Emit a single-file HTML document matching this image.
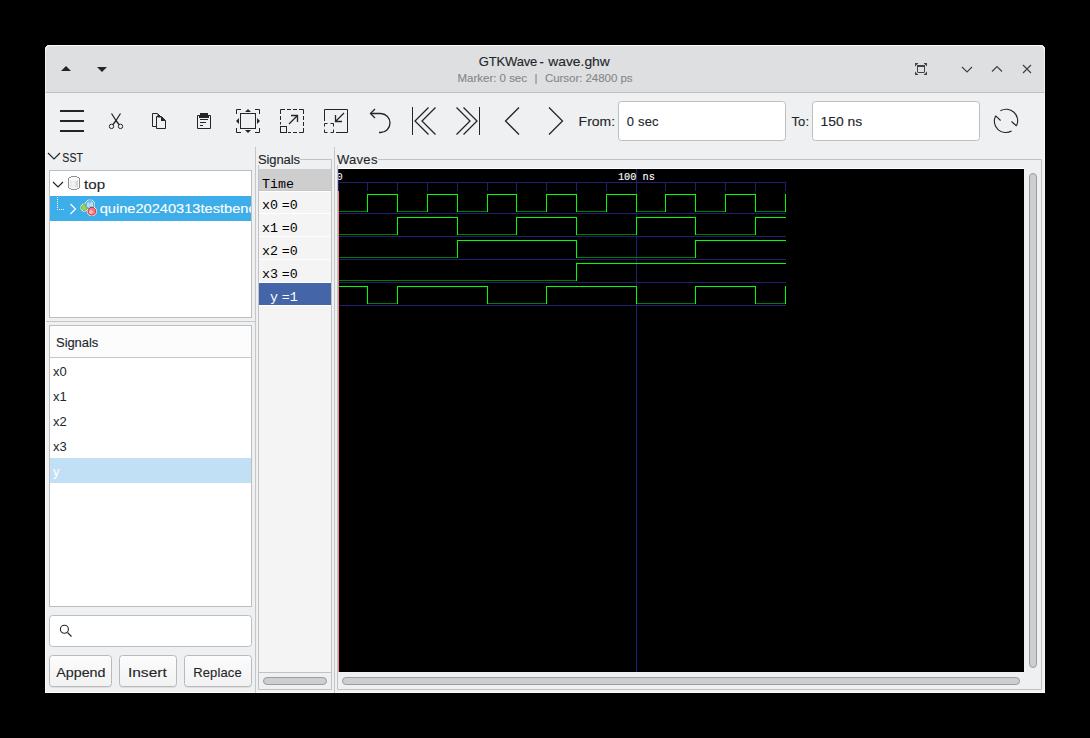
<!DOCTYPE html>
<html><head><meta charset="utf-8"><title>GTKWave - wave.ghw</title>
<style>html,body{margin:0;padding:0;background:#000;width:1090px;height:738px;overflow:hidden;position:relative;}</style>
</head><body>
<svg width="1090" height="738" viewBox="0 0 1090 738" style="position:absolute;left:0;top:0">
<rect x="0" y="0" width="1090" height="738" fill="#000"/>
<path d="M45 50 Q45 45 50 45 L1040 45 Q1045 45 1045 50 L1045 693 L45 693 Z" fill="#eff0f1"/>
<path d="M45 50 Q45 45 50 45 L1040 45 Q1045 45 1045 50 L1045 92 L45 92 Z" fill="#dedfe1"/>
<rect x="45" y="92" width="1000" height="1" fill="#bdbfc1" shape-rendering="crispEdges"/>
<path d="M45.5 693 L45.5 49.5" fill="none" stroke="#ffffff" stroke-opacity="0.55" stroke-width="1"/>
<path d="M1044.5 693 L1044.5 49.5" fill="none" stroke="#ffffff" stroke-opacity="0.55" stroke-width="1"/>
<path d="M45.5 50 Q45.5 45.5 50 45.5 L1040 45.5 Q1044.5 45.5 1044.5 50" fill="none" stroke="#ffffff" stroke-opacity="0.9" stroke-width="1"/>
<rect x="45" y="692" width="1000" height="1" fill="#ffffff" fill-opacity="0.8"/>
<polygon points="61,71 66,66 71,71" fill="#232629"/>
<polygon points="97,67 107,67 102,72" fill="#232629"/>
<text x="478.69" y="66" font-family="'Liberation Sans', sans-serif" font-size="13" fill="#232629" stroke="#232629" stroke-width="0.12" letter-spacing="-0.139" xml:space="preserve" >GTKWave</text>
<text x="539.39" y="66" font-family="'Liberation Sans', sans-serif" font-size="13" fill="#232629" stroke="#232629" stroke-width="0.12" letter-spacing="0.000" xml:space="preserve" >-</text>
<text transform="translate(548.22 66) scale(1.0658 1)" x="0" y="0" font-family="'Liberation Sans', sans-serif" font-size="13" fill="#232629" stroke="#232629" stroke-width="0.12" xml:space="preserve" >wave.ghw</text>
<text x="457.50" y="82" font-family="'Liberation Sans', sans-serif" font-size="11.5" fill="#85878a" stroke="#85878a" stroke-width="0.12" letter-spacing="-0.013" xml:space="preserve" >Marker: 0 sec</text>
<text x="534.60" y="82" font-family="'Liberation Sans', sans-serif" font-size="11.5" fill="#85878a" stroke="#85878a" stroke-width="0.12" letter-spacing="0.000" xml:space="preserve" >|</text>
<text x="544.95" y="82" font-family="'Liberation Sans', sans-serif" font-size="11.5" fill="#85878a" stroke="#85878a" stroke-width="0.12" letter-spacing="-0.044" xml:space="preserve" >Cursor: 24800 ps</text>
<text transform="translate(578.61 126) scale(1.0740 1)" x="0" y="0" font-family="'Liberation Sans', sans-serif" font-size="13" fill="#232629" stroke="#232629" stroke-width="0.12" xml:space="preserve" >From:</text>
<text x="791.40" y="126" font-family="'Liberation Sans', sans-serif" font-size="13" fill="#232629" stroke="#232629" stroke-width="0.12" letter-spacing="0.218" xml:space="preserve" >To:</text>
<rect x="618.5" y="101.5" width="167" height="39" rx="3" fill="#fff" stroke="#bcbec0"/>
<text x="626.79" y="126" font-family="'Liberation Sans', sans-serif" font-size="13" fill="#232629" stroke="#232629" stroke-width="0.12" letter-spacing="0.184" xml:space="preserve" >0 sec</text>
<rect x="812.5" y="101.5" width="167" height="39" rx="3" fill="#fff" stroke="#bcbec0"/>
<text transform="translate(820.53 126) scale(1.0684 1)" x="0" y="0" font-family="'Liberation Sans', sans-serif" font-size="13" fill="#232629" stroke="#232629" stroke-width="0.12" xml:space="preserve" >150 ns</text>
<polyline points="48,153 54,159 60,153" fill="none" stroke="#232629" stroke-width="1.2"/>
<text transform="translate(62.37 162) scale(0.8153 1)" x="0" y="0" font-family="'Liberation Sans', sans-serif" font-size="13" fill="#232629" stroke="#232629" stroke-width="0.12" xml:space="preserve" >SST</text>
<rect x="49.5" y="170.5" width="202" height="147" fill="#fff" stroke="#bcbec0"/>
<polyline points="53,182 58,187 63,182" fill="none" stroke="#232629" stroke-width="1.2"/>
<text transform="translate(84.10 189) scale(1.1627 1)" x="0" y="0" font-family="'Liberation Sans', sans-serif" font-size="13" fill="#232629" stroke="#232629" stroke-width="0.12" xml:space="preserve" >top</text>
<rect x="50" y="196" width="201" height="25" fill="#3daee9"/>
<polyline points="70.5,204 75.5,209 70.5,214" fill="none" stroke="#fff" stroke-width="1.2"/>
<path d="M57.5 197 V209.5 H64" fill="none" stroke="#fff" stroke-width="1" stroke-dasharray="1 1"/>
<svg x="50" y="196" width="201" height="25" overflow="hidden"><g transform="translate(-50 -196)"><text transform="translate(99.64 213) scale(1.1254 1)" x="0" y="0" font-family="'Liberation Sans', sans-serif" font-size="13" fill="#fff" stroke="#fff" stroke-width="0.12" xml:space="preserve" >quine20240313testbench</text></g></svg>
<rect x="46" y="321" width="209" height="1" fill="#c4c6c8"/>
<rect x="49.5" y="325.5" width="202" height="281" fill="#fff" stroke="#bcbec0"/>
<rect x="50" y="326" width="201" height="31" fill="#fcfcfc"/>
<rect x="50" y="357" width="201" height="1" fill="#c4c6c8"/>
<text x="56.09" y="347" font-family="'Liberation Sans', sans-serif" font-size="13" fill="#232629" stroke="#232629" stroke-width="0.12" letter-spacing="-0.087" xml:space="preserve" >Signals</text>
<text x="53" y="376" font-family='"Liberation Sans", sans-serif' font-size="13" fill="#232629">x0</text>
<text x="53" y="401" font-family='"Liberation Sans", sans-serif' font-size="13" fill="#232629">x1</text>
<text x="53" y="426" font-family='"Liberation Sans", sans-serif' font-size="13" fill="#232629">x2</text>
<text x="53" y="451" font-family='"Liberation Sans", sans-serif' font-size="13" fill="#232629">x3</text>
<rect x="50" y="458" width="201" height="25" fill="#c2e0f5"/>
<text x="53" y="476" font-family='"Liberation Sans", sans-serif' font-size="13" fill="#fff">y</text>
<defs><linearGradient id="btng" x1="0" x2="0" y1="0" y2="1"><stop offset="0" stop-color="#fcfcfc"/><stop offset="1" stop-color="#f2f2f3"/></linearGradient></defs>
<rect x="49.5" y="615.5" width="202" height="31" rx="3" fill="#fff" stroke="#bcbec0"/>
<rect x="49.5" y="656" width="62" height="32" rx="3.5" fill="#000" fill-opacity="0.07"/>
<rect x="49.5" y="655.5" width="62" height="31" rx="3" fill="url(#btng)" stroke="#b8babc"/>
<text transform="translate(56.20 677) scale(1.1000 1)" x="0" y="0" font-family="'Liberation Sans', sans-serif" font-size="13" fill="#232629" stroke="#232629" stroke-width="0.12" xml:space="preserve" >Append</text>
<rect x="119.5" y="656" width="57" height="32" rx="3.5" fill="#000" fill-opacity="0.07"/>
<rect x="119.5" y="655.5" width="57" height="31" rx="3" fill="url(#btng)" stroke="#b8babc"/>
<text transform="translate(127.88 677) scale(1.1984 1)" x="0" y="0" font-family="'Liberation Sans', sans-serif" font-size="13" fill="#232629" stroke="#232629" stroke-width="0.12" xml:space="preserve" >Insert</text>
<rect x="184.5" y="656" width="67" height="32" rx="3.5" fill="#000" fill-opacity="0.07"/>
<rect x="184.5" y="655.5" width="67" height="31" rx="3" fill="url(#btng)" stroke="#b8babc"/>
<text x="193.28" y="677" font-family="'Liberation Sans', sans-serif" font-size="13" fill="#232629" stroke="#232629" stroke-width="0.12" letter-spacing="0.108" xml:space="preserve" >Replace</text>
<rect x="255" y="147" width="1" height="546" fill="#c4c6c8"/>
<rect x="334" y="147" width="1" height="546" fill="#c4c6c8"/>
<path d="M300 159.5 H331.5 V689.5 H258.5 V165" fill="none" stroke="#c0c2c4"/>
<text x="257.99" y="164" font-family="'Liberation Sans', sans-serif" font-size="13" fill="#232629" stroke="#232629" stroke-width="0.12" letter-spacing="-0.104" xml:space="preserve" >Signals</text>
<rect x="259" y="169" width="72" height="503" fill="#f4f4f4"/>
<rect x="259" y="169" width="72" height="22" fill="#cecece"/>
<rect x="259" y="190" width="72" height="1" fill="#c6c6c6"/>
<rect x="259" y="191" width="72" height="1" fill="#fff"/>
<rect x="259" y="213" width="72" height="1" fill="#fff"/>
<rect x="259" y="236" width="72" height="1" fill="#fff"/>
<rect x="259" y="259" width="72" height="1" fill="#fff"/>
<rect x="259" y="282" width="72" height="1" fill="#fff"/>
<rect x="259" y="305" width="72" height="1" fill="#fff"/>
<rect x="259" y="283" width="72" height="22" fill="#4565a9"/>
<rect x="259" y="672" width="72" height="1" fill="#c0c2c4"/>
<text x="262" y="188" font-family='"Liberation Mono", monospace' font-size="13.33" fill="#000">Time</text>
<text x="262" y="209" font-family='"Liberation Mono", monospace' font-size="13.33" fill="#000">x0</text>
<text x="281.7" y="209" font-family='"Liberation Mono", monospace' font-size="13.33" fill="#000">=0</text>
<text x="262" y="232" font-family='"Liberation Mono", monospace' font-size="13.33" fill="#000">x1</text>
<text x="281.7" y="232" font-family='"Liberation Mono", monospace' font-size="13.33" fill="#000">=0</text>
<text x="262" y="255" font-family='"Liberation Mono", monospace' font-size="13.33" fill="#000">x2</text>
<text x="281.7" y="255" font-family='"Liberation Mono", monospace' font-size="13.33" fill="#000">=0</text>
<text x="262" y="278" font-family='"Liberation Mono", monospace' font-size="13.33" fill="#000">x3</text>
<text x="281.7" y="278" font-family='"Liberation Mono", monospace' font-size="13.33" fill="#000">=0</text>
<text x="270" y="301" font-family='"Liberation Mono", monospace' font-size="13.33" fill="#fff">y</text>
<text x="281.7" y="301" font-family='"Liberation Mono", monospace' font-size="13.33" fill="#fff">=1</text>
<rect x="263.5" y="677.5" width="63" height="7" rx="3.5" fill="#cdcecf" stroke="#9c9d9e"/>
<path d="M378 159.5 H1041.5 V689.5 H337.5 V165" fill="none" stroke="#c0c2c4"/>
<text x="336.90" y="164" font-family="'Liberation Sans', sans-serif" font-size="13" fill="#232629" stroke="#232629" stroke-width="0.12" letter-spacing="0.315" xml:space="preserve" >Waves</text>
<rect x="338" y="169" width="686" height="503" fill="#000"/>
<rect x="338" y="168" width="686" height="1" fill="#fff"/>
<rect x="342.5" y="677.5" width="677" height="7" rx="3.5" fill="#cdcecf" stroke="#9c9d9e"/>
<rect x="1029.5" y="173.5" width="7" height="494" rx="3.5" fill="#cdcecf" stroke="#9c9d9e"/>
<g shape-rendering="crispEdges">
<rect x="338" y="182" width="448" height="1" fill="#202070"/>
<rect x="338" y="169" width="1" height="503" fill="#202070"/>
<rect x="367" y="183" width="1" height="8" fill="#202070"/>
<rect x="397" y="183" width="1" height="8" fill="#202070"/>
<rect x="427" y="183" width="1" height="8" fill="#202070"/>
<rect x="457" y="183" width="1" height="8" fill="#202070"/>
<rect x="487" y="183" width="1" height="8" fill="#202070"/>
<rect x="516" y="183" width="1" height="8" fill="#202070"/>
<rect x="546" y="183" width="1" height="8" fill="#202070"/>
<rect x="576" y="183" width="1" height="8" fill="#202070"/>
<rect x="606" y="183" width="1" height="8" fill="#202070"/>
<rect x="636" y="169" width="1" height="503" fill="#202070"/>
<rect x="665" y="183" width="1" height="8" fill="#202070"/>
<rect x="695" y="183" width="1" height="8" fill="#202070"/>
<rect x="725" y="183" width="1" height="8" fill="#202070"/>
<rect x="755" y="183" width="1" height="8" fill="#202070"/>
<rect x="785" y="183" width="1" height="8" fill="#202070"/>
<rect x="338" y="213" width="448" height="1" fill="#202070"/>
<rect x="338" y="236" width="448" height="1" fill="#202070"/>
<rect x="338" y="259" width="448" height="1" fill="#202070"/>
<rect x="338" y="282" width="448" height="1" fill="#202070"/>
<rect x="338" y="305" width="448" height="1" fill="#202070"/>
<rect x="338" y="211" width="30" height="1" fill="#008000"/>
<rect x="367" y="194" width="31" height="1" fill="#00ff00"/>
<rect x="397" y="211" width="31" height="1" fill="#008000"/>
<rect x="427" y="194" width="31" height="1" fill="#00ff00"/>
<rect x="457" y="211" width="31" height="1" fill="#008000"/>
<rect x="487" y="194" width="30" height="1" fill="#00ff00"/>
<rect x="516" y="211" width="31" height="1" fill="#008000"/>
<rect x="546" y="194" width="31" height="1" fill="#00ff00"/>
<rect x="576" y="211" width="31" height="1" fill="#008000"/>
<rect x="606" y="194" width="31" height="1" fill="#00ff00"/>
<rect x="636" y="211" width="30" height="1" fill="#008000"/>
<rect x="665" y="194" width="31" height="1" fill="#00ff00"/>
<rect x="695" y="211" width="31" height="1" fill="#008000"/>
<rect x="725" y="194" width="31" height="1" fill="#00ff00"/>
<rect x="755" y="211" width="31" height="1" fill="#008000"/>
<rect x="785" y="194" width="1" height="1" fill="#00ff00"/>
<rect x="367" y="194" width="1" height="18" fill="#00ff00"/>
<rect x="397" y="194" width="1" height="18" fill="#00ff00"/>
<rect x="427" y="194" width="1" height="18" fill="#00ff00"/>
<rect x="457" y="194" width="1" height="18" fill="#00ff00"/>
<rect x="487" y="194" width="1" height="18" fill="#00ff00"/>
<rect x="516" y="194" width="1" height="18" fill="#00ff00"/>
<rect x="546" y="194" width="1" height="18" fill="#00ff00"/>
<rect x="576" y="194" width="1" height="18" fill="#00ff00"/>
<rect x="606" y="194" width="1" height="18" fill="#00ff00"/>
<rect x="636" y="194" width="1" height="18" fill="#00ff00"/>
<rect x="665" y="194" width="1" height="18" fill="#00ff00"/>
<rect x="695" y="194" width="1" height="18" fill="#00ff00"/>
<rect x="725" y="194" width="1" height="18" fill="#00ff00"/>
<rect x="755" y="194" width="1" height="18" fill="#00ff00"/>
<rect x="785" y="194" width="1" height="18" fill="#00ff00"/>
<rect x="338" y="234" width="60" height="1" fill="#008000"/>
<rect x="397" y="217" width="61" height="1" fill="#00ff00"/>
<rect x="457" y="234" width="60" height="1" fill="#008000"/>
<rect x="516" y="217" width="61" height="1" fill="#00ff00"/>
<rect x="576" y="234" width="61" height="1" fill="#008000"/>
<rect x="636" y="217" width="60" height="1" fill="#00ff00"/>
<rect x="695" y="234" width="61" height="1" fill="#008000"/>
<rect x="755" y="217" width="31" height="1" fill="#00ff00"/>
<rect x="397" y="217" width="1" height="18" fill="#00ff00"/>
<rect x="457" y="217" width="1" height="18" fill="#00ff00"/>
<rect x="516" y="217" width="1" height="18" fill="#00ff00"/>
<rect x="576" y="217" width="1" height="18" fill="#00ff00"/>
<rect x="636" y="217" width="1" height="18" fill="#00ff00"/>
<rect x="695" y="217" width="1" height="18" fill="#00ff00"/>
<rect x="755" y="217" width="1" height="18" fill="#00ff00"/>
<rect x="338" y="257" width="120" height="1" fill="#008000"/>
<rect x="457" y="240" width="120" height="1" fill="#00ff00"/>
<rect x="576" y="257" width="120" height="1" fill="#008000"/>
<rect x="695" y="240" width="91" height="1" fill="#00ff00"/>
<rect x="457" y="240" width="1" height="18" fill="#00ff00"/>
<rect x="576" y="240" width="1" height="18" fill="#00ff00"/>
<rect x="695" y="240" width="1" height="18" fill="#00ff00"/>
<rect x="338" y="280" width="239" height="1" fill="#008000"/>
<rect x="576" y="263" width="210" height="1" fill="#00ff00"/>
<rect x="576" y="263" width="1" height="18" fill="#00ff00"/>
<rect x="338" y="286" width="30" height="1" fill="#00ff00"/>
<rect x="367" y="303" width="31" height="1" fill="#008000"/>
<rect x="397" y="286" width="91" height="1" fill="#00ff00"/>
<rect x="487" y="303" width="60" height="1" fill="#008000"/>
<rect x="546" y="286" width="91" height="1" fill="#00ff00"/>
<rect x="636" y="303" width="60" height="1" fill="#008000"/>
<rect x="695" y="286" width="61" height="1" fill="#00ff00"/>
<rect x="755" y="303" width="31" height="1" fill="#008000"/>
<rect x="785" y="286" width="1" height="1" fill="#00ff00"/>
<rect x="367" y="286" width="1" height="18" fill="#00ff00"/>
<rect x="397" y="286" width="1" height="18" fill="#00ff00"/>
<rect x="487" y="286" width="1" height="18" fill="#00ff00"/>
<rect x="546" y="286" width="1" height="18" fill="#00ff00"/>
<rect x="636" y="286" width="1" height="18" fill="#00ff00"/>
<rect x="695" y="286" width="1" height="18" fill="#00ff00"/>
<rect x="755" y="286" width="1" height="18" fill="#00ff00"/>
<rect x="785" y="286" width="1" height="18" fill="#00ff00"/>
<rect x="338" y="191" width="1" height="481" fill="#ff8080"/>
</g>
<svg x="338" y="169" width="686" height="503" overflow="hidden"><g transform="translate(-338 -169)"><text x="336.15" y="180" font-family="'Liberation Mono', monospace" font-size="11" fill="#fff" stroke="#fff" stroke-width="0" letter-spacing="0.000" xml:space="preserve" >0</text></g></svg>
<text transform="translate(617.90 180) scale(0.9327 1)" x="0" y="0" font-family="'Liberation Mono', monospace" font-size="11" fill="#fff" stroke="#fff" stroke-width="0.12" xml:space="preserve" >100 ns</text>
<g fill="none" stroke="#232629" stroke-width="1">
<rect x="60" y="110" width="24" height="2" fill="#232629" stroke="none"/>
<rect x="60" y="120" width="24" height="2" fill="#232629" stroke="none"/>
<rect x="60" y="130" width="24" height="2" fill="#232629" stroke="none"/>
<path d="M111.5 113.5 L116 120.5 Q117.8 123 119 124.5" stroke-width="1.3"/>
<path d="M120.5 113.5 L116 120.5 Q114.2 123 113 124.5" stroke-width="1.3"/>
<circle cx="111.5" cy="126.4" r="2.2"/>
<circle cx="120.5" cy="126.4" r="2.2"/>
<path d="M156.5 126.5 H152.5 V113.5 H157.5 L160.5 116.5"/>
<path d="M156.5 116.5 H161.5 L165.5 120.5 V128.5 H156.5 Z"/>
<path d="M157.5 113.5 L161.5 117.5 L157.5 117.5 Z" fill="#232629" stroke="none"/>
<path d="M161 116.5 L165.8 121 L161 121 Z" fill="#232629" stroke="none"/>
<path d="M199.5 115.5 H197.5 V128.5 H210.5 V115.5 H208.5"/>
<path d="M200 113 H208 V115 H209 V118 H199 V115 H200 Z" fill="#232629" stroke="none"/>
<rect x="200" y="119" width="8" height="1" fill="#232629" stroke="none"/>
<rect x="200" y="122" width="6" height="1" fill="#232629" stroke="none"/>
<rect x="200" y="125" width="3" height="1" fill="#232629" stroke="none"/>
<path d="M236.5 114 V109.5 H241 M255 109.5 H259.5 V114 M259.5 128 V132.5 H255 M241 132.5 H236.5 V128"/>
<rect x="240.5" y="113.5" width="15" height="15"/>
<path d="M245 112 L248 109 L251 112 Z M245 130 L248 133 L251 130 Z M239 118 L236 121 L239 124 Z M257 118 L260 121 L257 124 Z" fill="#232629" stroke="none"/>
<path d="M280.5 114 V109.5 H285 M287 109.5 H291 M293 109.5 H297 M299 109.5 H303.5 V114 M303.5 116 V120 M303.5 122 V126 M303.5 128 V132.5 H299 M297 132.5 H293 M291 132.5 H288 M280.5 124.5 V122 M280.5 120 V116"/>
<rect x="280.5" y="126.5" width="6" height="6"/>
<path d="M289 124 L297.5 115.5 M291 115.5 H297.5 V122" stroke-width="1.3"/>
<path d="M324.5 121 V109.5 H347.5 V132.5 H336"/>
<path d="M324.5 126.5 V123.5 H327.5 M330.5 123.5 H333.5 V126.5 M333.5 129.5 V132.5 H330.5 M327.5 132.5 H324.5 V129.5"/>
<path d="M344 113 L335.5 121.5 M335.5 115 V121.5 H342" stroke-width="1.3"/>
<path d="M370.5 113.5 H380.5 A9.5 9.5 0 0 1 380.5 132.5 H379" stroke-width="1.3"/>
<path d="M375 109 L370.5 113.5 L375 118" stroke-width="1.3"/>
<path d="M412.5 107 V135"/>
<path d="M428.5 107.5 L415 121 L428.5 134.5 M435.5 107.5 L422 121 L435.5 134.5" stroke-width="1.3"/>
<path d="M479.5 107 V135"/>
<path d="M456.5 107.5 L470 121 L456.5 134.5 M463.5 107.5 L477 121 L463.5 134.5" stroke-width="1.3"/>
<path d="M519 107.5 L505.5 121 L519 134.5" stroke-width="1.3"/>
<path d="M549 107.5 L562.5 121 L549 134.5" stroke-width="1.3"/>
<path d="M1000.4 110.8 A11.5 11.5 0 0 1 1016.6 125.6 M1011.5 121.5 L1016.6 126" stroke-width="1.1"/>
<path d="M1011.6 131 A11.5 11.5 0 0 1 995.4 116.2 M1000.6 120.5 L995.4 115.6" stroke-width="1.1"/>
</g>
<g fill="none" stroke="#404346" stroke-width="1">
<path d="M915 63 H918.5 L915 66.5 Z M927 63 H923.5 L927 66.5 Z M915 75 H918.5 L915 71.5 Z M927 75 H923.5 L927 71.5 Z" fill="#404346" stroke="none"/>
<rect x="917.5" y="65.5" width="7" height="7" rx="0.5"/>
<rect x="917" y="65" width="8" height="2" fill="#404346" stroke="none"/>
<path d="M962 67 L967 72 L972 67" stroke-width="1.15"/>
<path d="M992 71.5 L997 66.5 L1002 71.5" stroke-width="1.15"/>
<path d="M1023 65 L1031 73 M1031 65 L1023 73" stroke-width="1.15"/>
</g>
<g shape-rendering="crispEdges">
<path d="M71 176 H77 V177 H79 V178 H80 V188 H79 V189 H77 V190 H71 V189 H69 V188 H68 V178 H69 V177 H71 Z" fill="#8e8e8e"/>
<path d="M71 177 H77 V178 H79 V188 H77 V189 H71 V188 H69 V178 H71 Z" fill="#fafafa"/>
</g>
<defs><linearGradient id="cyl" x1="0" x2="1" y1="0" y2="0"><stop offset="0" stop-color="#e4e4e4"/><stop offset="0.45" stop-color="#f4f4f4"/><stop offset="1" stop-color="#cfcfcf"/></linearGradient></defs>
<path d="M70 180 Q74 182 78 180 V187 Q74 188.5 70 187 Z" fill="url(#cyl)"/>
<polygon points="88.28,209.21 86.01,211.48 82.79,211.48 80.52,209.21 80.52,205.99 82.79,203.72 86.01,203.72 88.28,205.99" fill="#fff"/>
<polygon points="94.99,206.87 92.07,209.79 87.93,209.79 85.01,206.87 85.01,202.73 87.93,199.81 92.07,199.81 94.99,202.73" fill="#fff"/>
<polygon points="96.70,213.29 93.89,216.10 89.91,216.10 87.10,213.29 87.10,209.31 89.91,206.50 93.89,206.50 96.70,209.31" fill="#fff"/>
<polygon points="87.36,208.82 85.62,210.56 83.18,210.56 81.44,208.82 81.44,206.38 83.18,204.64 85.62,204.64 87.36,206.38" fill="#9bd060" stroke="#5fa82a" stroke-width="0.8"/>
<polygon points="93.97,206.45 91.65,208.77 88.35,208.77 86.03,206.45 86.03,203.15 88.35,200.83 91.65,200.83 93.97,203.15" fill="#8ad0f2" stroke="#2f86b8" stroke-width="0.8"/>
<path d="M88 203 V207 M89.5 205 H91 M92 202.5 V206" stroke="#fff" stroke-width="0.8" fill="none"/>
<polygon points="95.69,212.87 93.47,215.09 90.33,215.09 88.11,212.87 88.11,209.73 90.33,207.51 93.47,207.51 95.69,209.73" fill="#f27a80" stroke="#d01f2a" stroke-width="0.9"/>
<circle cx="91" cy="212" r="1.3" fill="none" stroke="#fff" stroke-width="0.7"/>
<circle cx="64.4" cy="629.3" r="4" fill="none" stroke="#232629" stroke-width="1.1"/>
<path d="M67.5 632.5 L71.5 636.5" stroke="#232629" stroke-width="1.1"/>
</svg>
</body></html>
